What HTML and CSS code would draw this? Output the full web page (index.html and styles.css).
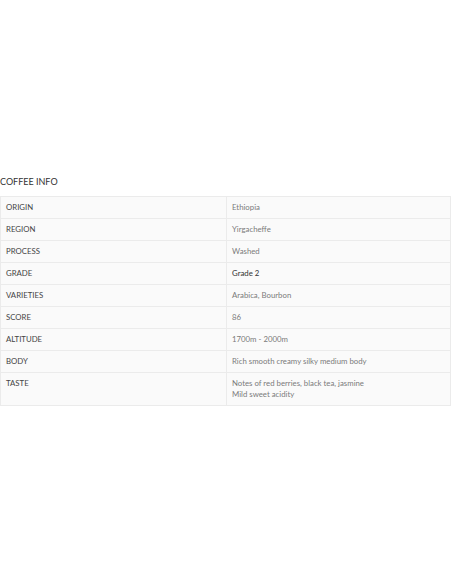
FILE: index.html
```html
<!DOCTYPE html>
<html>
<head>
<meta charset="utf-8">
<link rel="stylesheet" href="styles.css">
</head>
<body>
<div class="page">
  <h2 class="title">COFFEE INFO</h2>
  <table class="info">
    <tr><td class="key">ORIGIN</td><td class="val">Ethiopia</td></tr>
    <tr><td class="key">REGION</td><td class="val">Yirgacheffe</td></tr>
    <tr><td class="key">PROCESS</td><td class="val">Washed</td></tr>
    <tr><td class="key">GRADE</td><td class="val dark">Grade 2</td></tr>
    <tr><td class="key">VARIETIES</td><td class="val">Arabica, Bourbon</td></tr>
    <tr><td class="key">SCORE</td><td class="val">86</td></tr>
    <tr><td class="key">ALTITUDE</td><td class="val">1700m - 2000m</td></tr>
    <tr><td class="key">BODY</td><td class="val">Rich smooth creamy silky medium body</td></tr>
    <tr><td class="key">TASTE</td><td class="val">Notes of red berries, black tea, jasmine<br>Mild sweet acidity</td></tr>
  </table>
</div>
</body>
</html>
```

FILE: styles.css
```css
html, body {
  margin: 0;
  padding: 0;
  background: #fff;
}
body {
  font-family: Lato, "Noto Sans", sans-serif;
}
.page {
  padding-top: 176px;
}
.title {
  margin: 0 0 8px 0;
  font-size: 9px;
  font-weight: 400;
  color: #333;
  line-height: 12px;
}
.info {
  width: 451px;
  border-collapse: collapse;
  background: #fafafa;
  border: 1px solid #ebebeb;
}
.info td {
  border: 1px solid #ebebeb;
  padding: 5px 5px;
  font-size: 7.8px;
  line-height: 11px;
  vertical-align: top;
}
.key {
  width: 215px;
  color: #444;
}
.val {
  color: #7a7a7a;
}
.val.dark {
  color: #333;
}
```
